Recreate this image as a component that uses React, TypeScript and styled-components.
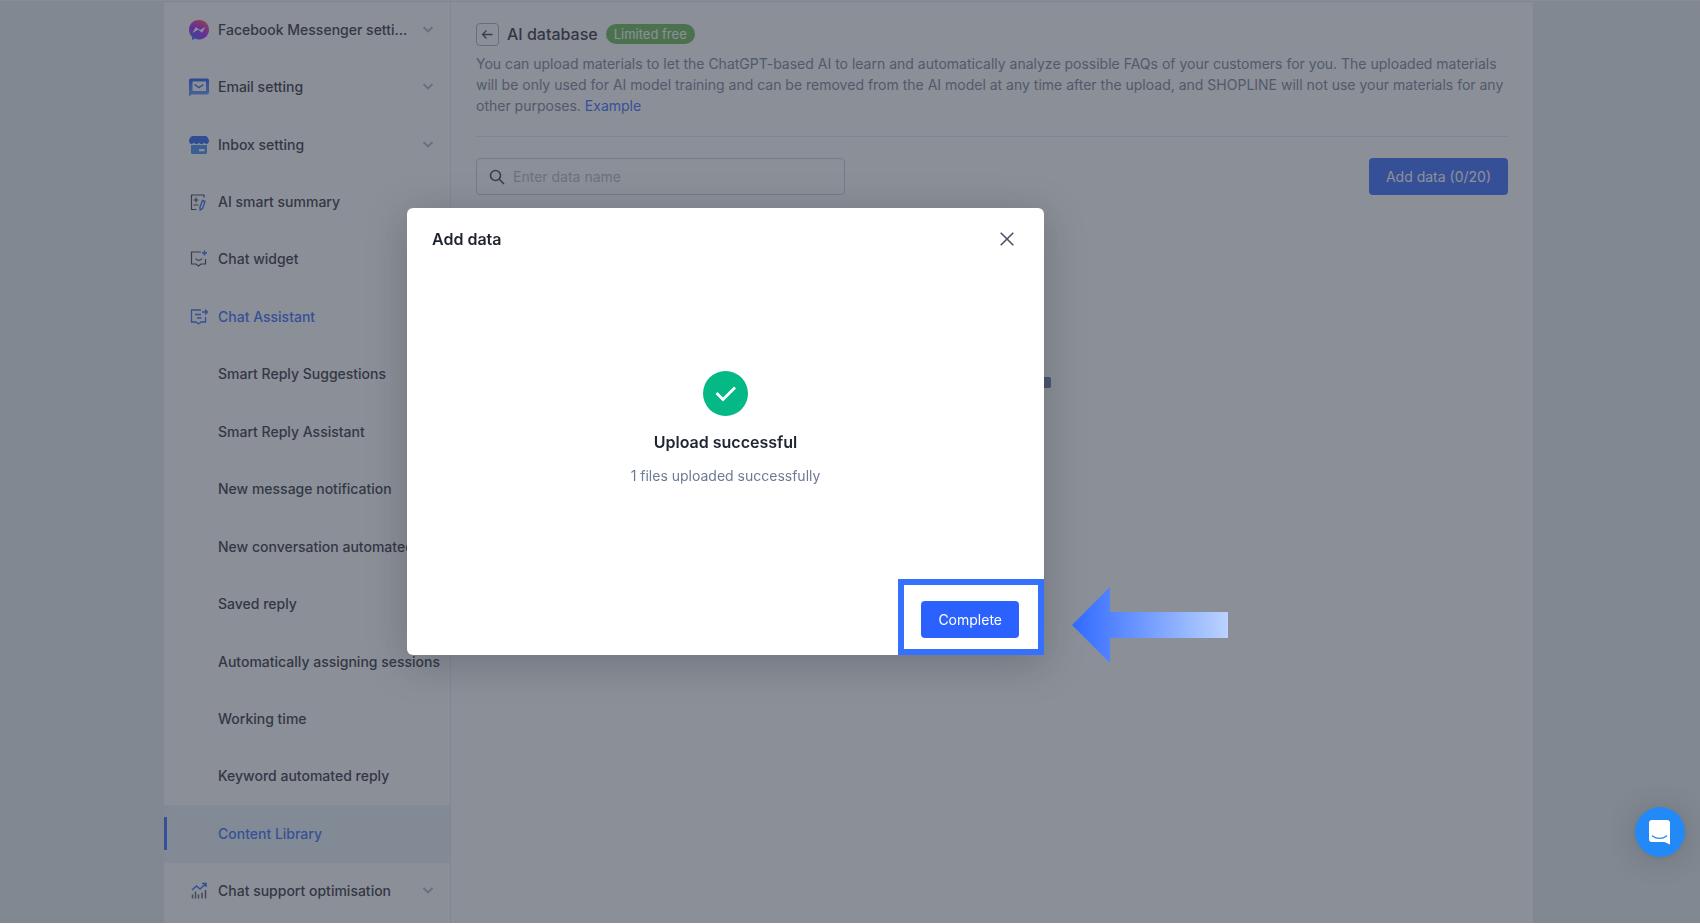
import React from 'react';
import styled, { createGlobalStyle } from 'styled-components';

const Global = createGlobalStyle`
  *, *::before, *::after { box-sizing: border-box; }
  body { margin: 0; background: #e6edf1; font-family: Inter, "Liberation Sans", sans-serif; font-size: 14px; color: #1f2430; }
  button, input { font: inherit; }
  h1, h2, h3, p, ul { margin: 0; padding: 0; }
`;

const Page = styled.div`
  min-height: 100vh;
  display: flex;
  flex-direction: column;
  padding: 0 167px 0 164px;
  border-top: 1px solid #f5f8fb;
  border-bottom: 1px solid #ffffff;
`;

const Workspace = styled.div`
  flex: 1;
  display: flex;
  background: #ffffff;
  box-shadow: inset 0 1px 1px #e3e8f2;
`;

const Sidebar = styled.nav`
  flex: none;
  width: 287px;
  border-right: 1px solid #e3e8f2;
`;

const Menu = styled.ul`
  display: grid;
  grid-template-columns: minmax(0, 1fr);
  grid-auto-rows: 1fr;
  min-height: calc(100vh - 5px);
  list-style: none;
`;

const MenuItem = styled.li<{ $selected?: boolean }>`
  display: flex;
  align-items: center;
  background: ${(p) => (p.$selected ? '#e8f5fa' : 'transparent')};
  &::before {
    content: '';
    width: 3px;
    height: 33px;
    background: ${(p) => (p.$selected ? '#2b62ff' : 'transparent')};
  }
`;

const MenuLink = styled.a<{ $accent?: boolean }>`
  flex: 1;
  min-width: 0;
  display: flex;
  align-items: center;
  gap: 8px;
  padding: 0 8px 0 21px;
  font-weight: 500;
  line-height: 20px;
  text-decoration: none;
  color: ${(p) => (p.$accent ? '#2b62ff' : '#1f2430')};
`;

const IconSlot = styled.span`
  flex: none;
  width: 22px;
  height: 22px;
  display: flex;
  align-items: center;
  justify-content: center;
`;

const MenuLabel = styled.span`
  flex: 1;
  white-space: nowrap;
  overflow: hidden;
  text-overflow: ellipsis;
`;

const Content = styled.main`
  flex: 1;
  min-width: 0;
  padding: 21px 25px 0;
`;

const TitleRow = styled.div`
  display: flex;
  align-items: center;
  gap: 8px;
`;

const BackButton = styled.button`
  width: 23px;
  height: 23px;
  padding: 0;
  display: flex;
  align-items: center;
  justify-content: center;
  border: 1px solid #a0abc0;
  border-radius: 4px;
  background: none;
`;

const Title = styled.h1`
  font-size: 16px;
  line-height: 24px;
  font-weight: 500;
`;

const Badge = styled.span`
  padding: 0 8px;
  border-radius: 10px;
  background: #62b44a;
  color: #ffffff;
  font-size: 13px;
  line-height: 20px;
`;

const Description = styled.p`
  margin-top: 7px;
  padding-bottom: 20px;
  border-bottom: 1px solid #e3e8f2;
  line-height: 21px;
  color: #6d7a94;
`;

const TextLink = styled.a`
  color: #2b62ff;
  text-decoration: none;
`;

const Toolbar = styled.div`
  display: flex;
  justify-content: space-between;
  margin-top: 21px;
`;

const SearchBox = styled.label`
  width: 369px;
  height: 37px;
  display: flex;
  align-items: center;
  gap: 8px;
  padding: 0 12px;
  border: 1px solid #c4ccdc;
  border-radius: 4px;
`;

const SearchInput = styled.input`
  flex: 1;
  min-width: 0;
  padding: 0;
  border: 0;
  outline: 0;
  background: none;
  &::placeholder { color: #adb6c6; opacity: 1; }
`;

const PrimaryButton = styled.button`
  height: 37px;
  padding: 0 17px;
  border: 0;
  border-radius: 4px;
  background: #2b62ff;
  color: #ffffff;
`;

const EmptyState = styled.div`
  display: flex;
  justify-content: center;
  padding-top: 182px;
`;

const EmptyBar = styled.div`
  width: 118px;
  height: 11px;
  border-radius: 2px;
  background: #5d7098;
`;

const Overlay = styled.div`
  position: fixed;
  inset: 0 0 1px;
  padding: 208px 0 0 407px;
  background: rgba(62, 68, 82, 0.6);
`;

const Dialog = styled.section`
  position: relative;
  width: 637px;
  height: 447px;
  display: flex;
  flex-direction: column;
  border-radius: 6px;
  background: #ffffff;
  box-shadow: 0 8px 40px rgba(23, 31, 47, 0.25);
`;

const DialogHeader = styled.header`
  display: flex;
  align-items: center;
  justify-content: space-between;
  padding: 19px 25px 0;
`;

const DialogTitle = styled.h2`
  font-size: 16px;
  line-height: 24px;
  font-weight: 600;
`;

const CloseButton = styled.button`
  width: 24px;
  height: 24px;
  padding: 0;
  display: flex;
  align-items: center;
  justify-content: center;
  border: 0;
  background: none;
`;

const Result = styled.div`
  flex: 1;
  display: flex;
  flex-direction: column;
  align-items: center;
  padding-top: 120px;
`;

const ResultTitle = styled.h3`
  margin-top: 14px;
  font-size: 16px;
  line-height: 24px;
  font-weight: 600;
`;

const ResultText = styled.p`
  margin-top: 12px;
  line-height: 20px;
  color: #6d7a94;
`;

const DialogFooter = styled.footer`
  display: flex;
  justify-content: flex-end;
`;

const Highlight = styled.div`
  padding: 16px 19px 11px 17px;
  border: 6px solid #3670ff;
`;

const Pointer = styled.svg`
  position: absolute;
  left: 665px;
  bottom: -8px;
`;

const ChatLauncher = styled.button`
  position: fixed;
  right: 15px;
  bottom: 67px;
  width: 50px;
  height: 50px;
  padding: 0;
  display: flex;
  align-items: center;
  justify-content: center;
  border: 0;
  border-radius: 50%;
  background: #2389f7;
  box-shadow: 0 2px 32px rgba(0, 0, 0, 0.16), 0 1px 6px rgba(0, 0, 0, 0.06);
`;

const MessengerIcon = () => (
  <svg width="22" height="22" viewBox="0 0 22 22">
    <defs>
      <radialGradient id="messenger" cx="0.2" cy="1" r="1.1">
        <stop offset="0" stopColor="#0090ff" />
        <stop offset="0.25" stopColor="#6a2dff" />
        <stop offset="0.6" stopColor="#a410ff" />
        <stop offset="1" stopColor="#ff3a5c" />
      </radialGradient>
    </defs>
    <path d="M11 1C5.300 1 1 5.200 1 10.700c0 2.800 1.200 5.300 3 7V21l3.200-1.200c1.200.4 2.500.6 3.800.6 5.700 0 10-4.200 10-9.700S16.700 1 11 1Z" fill="url(#messenger)" />
    <path d="m4.500 14 3.300-6 4.200 3 5.500-3.200-3.400 5.900-4-2.900Z" fill="#fff" />
  </svg>
);

const EmailIcon = () => (
  <svg width="22" height="22" viewBox="0 0 22 22">
    <defs>
      <linearGradient id="mail" x1="0" y1="0" x2="0" y2="1">
        <stop stopColor="#1450f0" />
        <stop offset="1" stopColor="#5a9aff" />
      </linearGradient>
    </defs>
    <path fillRule="evenodd" d="M3 2.500h16a2 2 0 0 1 2 2V16.500a2 2 0 0 1-2 2H4L1 20.500V4.500a2 2 0 0 1 2-2ZM4.500 5.500v9.500h13.500V5.500Z" fill="url(#mail)" />
    <path d="m6.500 8.500 4.500 3.200L15.500 8.500" fill="none" stroke="#1f5af0" strokeWidth="1.500" />
  </svg>
);

const StoreIcon = () => (
  <svg width="22" height="22" viewBox="0 0 22 22">
    <path d="M3 11h16v7.500a1.500 1.500 0 0 1-1.500 1.500h-13A1.500 1.500 0 0 1 3 18.500Z" fill="#3387f8" />
    <path d="M4.500 2h13c1.500 0 3.500 3 3.500 5 0 3.600-3.900 3.600-5 1.800-1.200 1.800-3.900 1.800-5 0-1.100 1.800-3.800 1.800-5 0C4.900 10.600 1 10.600 1 7c0-2 2-5 3.500-5Z" fill="#1f5af0" />
    <rect x="11" y="15" width="5.500" height="2.300" fill="#fff" />
  </svg>
);

const SummaryIcon = () => (
  <svg width="22" height="22" viewBox="0 0 22 22" fill="none" stroke="#2f3646" strokeWidth="1.200">
    <path d="M8.500 18.500H3.500V4H16v2.500M8 6.500v5M5.500 9h5M5.500 14h5" />
    <path d="m14.500 9.500 2.500 1-2.500 7-2.300 1.500-.3-2.600Z" stroke="#2b62ff" strokeWidth="1.400" />
  </svg>
);

const WidgetIcon = () => (
  <svg width="22" height="22" viewBox="0 0 22 22" fill="none" stroke="#2f3646" strokeWidth="1.200">
    <path d="M13 4H3.500v12H8l2.500 2 2.500-2h4.500v-5M7.500 10.500c1.500 2.500 5 2.500 6.500 0" />
    <path d="M16.500 2.500v5M14 5h5" stroke="#2b62ff" strokeWidth="1.500" />
  </svg>
);

const AssistantIcon = () => (
  <svg width="22" height="22" viewBox="0 0 22 22" fill="none" stroke="#2b62ff" strokeWidth="1.300">
    <path d="M13 4H3.500v12H8l2.500 2 2.500-2h4.500v-5M7 8.500h6M9 12h4.500M14 6h5.500M17 3.500 19.500 6 17 8.500" />
  </svg>
);

const ChartIcon = () => (
  <svg width="22" height="22" viewBox="0 0 22 22" fill="none">
    <path d="M4.500 18.500v-4M7.500 18.500v-7M10.500 18.500v-4M14 18.500v-6M17.500 18.500V10" stroke="#4b5264" strokeWidth="1.500" />
    <path d="m4 10 4.500-4 3.500 3 5.500-5M14 3.500h4V7" stroke="#2b62ff" strokeWidth="1.500" />
  </svg>
);

const ChevronIcon = styled.svg`
  flex: none;
  margin-right: 7px;
`;

const Chevron = () => (
  <ChevronIcon width="14" height="14" viewBox="0 0 14 14" fill="none" stroke="#a6b0c2" strokeWidth="1.800">
    <path d="m2.500 4 4.500 4.500L11.500 4" />
  </ChevronIcon>
);

type Entry = { label: string; icon?: React.ReactNode; expandable?: boolean; accent?: boolean; selected?: boolean };

const entries: Entry[] = [
  { label: 'Facebook Messenger settings', icon: <MessengerIcon />, expandable: true },
  { label: 'Email setting', icon: <EmailIcon />, expandable: true },
  { label: 'Inbox setting', icon: <StoreIcon />, expandable: true },
  { label: 'AI smart summary', icon: <SummaryIcon /> },
  { label: 'Chat widget', icon: <WidgetIcon /> },
  { label: 'Chat Assistant', icon: <AssistantIcon />, accent: true },
  { label: 'Smart Reply Suggestions' },
  { label: 'Smart Reply Assistant' },
  { label: 'New message notification' },
  { label: 'New conversation automated' },
  { label: 'Saved reply' },
  { label: 'Automatically assigning sessions' },
  { label: 'Working time' },
  { label: 'Keyword automated reply' },
  { label: 'Content Library', accent: true, selected: true },
  { label: 'Chat support optimisation', icon: <ChartIcon />, expandable: true },
];

export default function App() {
  return (
    <>
      <Global />
      <Page>
        <Workspace>
          <Sidebar>
            <Menu>
              {entries.map((e) => (
                <MenuItem key={e.label} $selected={e.selected}>
                  <MenuLink href="#" $accent={e.accent}>
                    <IconSlot>{e.icon}</IconSlot>
                    <MenuLabel>{e.label}</MenuLabel>
                    {e.expandable && <Chevron />}
                  </MenuLink>
                </MenuItem>
              ))}
            </Menu>
          </Sidebar>
          <Content>
            <TitleRow>
              <BackButton aria-label="Back">
                <svg width="13" height="13" viewBox="0 0 13 13" fill="none" stroke="#2f3646" strokeWidth="1.300">
                  <path d="M11.500 6.500h-10M5.500 2.500l-4 4 4 4" />
                </svg>
              </BackButton>
              <Title>AI database</Title>
              <Badge>Limited free</Badge>
            </TitleRow>
            <Description>
              You can upload materials to let the ChatGPT-based AI to learn and automatically analyze possible FAQs of
              your customers for you. The uploaded materials will be only used for AI model training and can be removed
              from the AI model at any time after the upload, and SHOPLINE will not use your materials for any other
              purposes. <TextLink href="#">Example</TextLink>
            </Description>
            <Toolbar>
              <SearchBox>
                <svg width="16" height="16" viewBox="0 0 16 16" fill="none" stroke="#2f3646" strokeWidth="1.600">
                  <circle cx="6.500" cy="6.500" r="5" />
                  <path d="m10 10 5 5" />
                </svg>
                <SearchInput aria-label="Data name" placeholder="Enter data name" />
              </SearchBox>
              <PrimaryButton>Add data (0/20)</PrimaryButton>
            </Toolbar>
            <EmptyState>
              <EmptyBar />
            </EmptyState>
          </Content>
        </Workspace>
      </Page>
      <Overlay>
        <Dialog role="dialog" aria-labelledby="dialog-title">
          <DialogHeader>
            <DialogTitle id="dialog-title">Add data</DialogTitle>
            <CloseButton aria-label="Close">
              <svg width="14" height="14" viewBox="0 0 14 14" stroke="#4b5264" strokeWidth="1.600">
                <path d="M.7.7l12.600 12.600M13.300.7.7 13.300" />
              </svg>
            </CloseButton>
          </DialogHeader>
          <Result>
            <svg width="45" height="45" viewBox="0 0 45 45">
              <circle cx="22.500" cy="22.500" r="22.500" fill="#04b986" />
              <path d="m13.500 22 6.500 6.500L32 16.500" fill="none" stroke="#fff" strokeWidth="2.800" />
            </svg>
            <ResultTitle>Upload successful</ResultTitle>
            <ResultText>1 files uploaded successfully</ResultText>
          </Result>
          <DialogFooter>
            <Highlight>
              <PrimaryButton>Complete</PrimaryButton>
            </Highlight>
          </DialogFooter>
          <Pointer width="156" height="76" viewBox="0 0 156 76" aria-hidden="true">
            <defs>
              <linearGradient id="pointer">
                <stop stopColor="#3069ff" />
                <stop offset="1" stopColor="#bcd3ff" />
              </linearGradient>
            </defs>
            <path d="M0 38 38 0v25h118v26H38v25Z" fill="url(#pointer)" />
          </Pointer>
        </Dialog>
      </Overlay>
      <ChatLauncher aria-label="Open chat">
        <svg width="24" height="26" viewBox="0 0 24 26">
          <path d="M4 1h15a3 3 0 0 1 3 3v21.500L16.500 23H4a3 3 0 0 1-3-3V4a3 3 0 0 1 3-3Z" fill="#fff" />
          <path d="M4.500 17c4 3.200 10 3.200 14 0" fill="none" stroke="#2389f7" strokeWidth="1.400" strokeLinecap="round" />
        </svg>
      </ChatLauncher>
    </>
  );
}
